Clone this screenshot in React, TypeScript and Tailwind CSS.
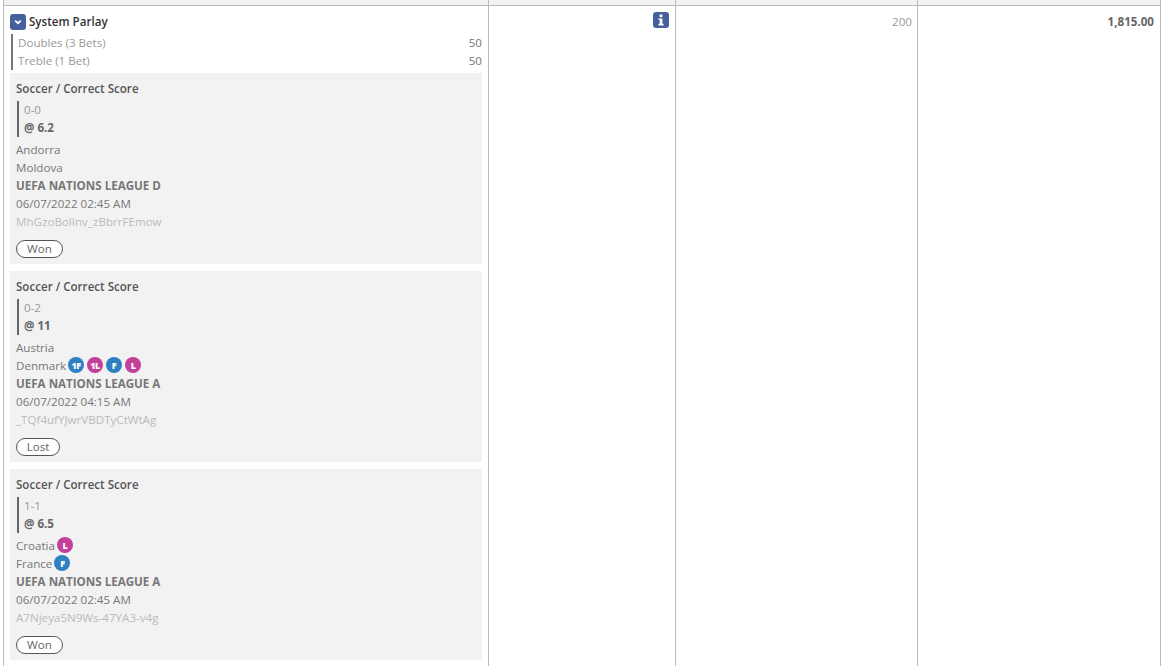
const font = { fontFamily: '"Open Sans", "Noto Sans", sans-serif' };

function Chip({ t, c, first }: { t: string; c: "b" | "m"; first?: boolean }) {
  return (
    <span
      className={`${first ? "ml-[2px]" : "ml-[3px]"} mb-[2px] inline-flex h-[16px] w-[16px] items-center justify-center rounded-full text-[9px] font-extrabold leading-none tracking-[-0.5px] text-white ${c === "b" ? "bg-[#2f80c2]" : "bg-[#c2409a]"}`}
    >
      {t}
    </span>
  );
}

type Leg = {
  score: string;
  odds: string;
  home: React.ReactNode;
  away: React.ReactNode;
  league: string;
  date: string;
  id: string;
  status: string;
  w: string;
};

function Card({ leg }: { leg: Leg }) {
  return (
    <div className="bg-[#f2f2f2] px-[6px] pb-[6px] pt-[7px] text-[11.6px] leading-[18px] text-[#777]">
      <div className="h-[18px] font-semibold text-[#555]">Soccer / Correct Score</div>
      <div className="ml-px mt-[3px] border-l-2 border-[#666] pl-[5px]">
        <div className="h-[18px] text-[#999]">{leg.score}</div>
        <div className="h-[18px] font-bold text-[#666]">{leg.odds}</div>
      </div>
      <div className="mt-[4px] flex h-[18px] items-center">{leg.home}</div>
      <div className="flex h-[18px] items-center">{leg.away}</div>
      <div className="h-[18px] font-bold text-[#777]">{leg.league}</div>
      <div className="h-[18px]">{leg.date}</div>
      <div className="h-[18px] text-[#bbb]">{leg.id}</div>
      <div className={`mt-[9px] flex h-[18px] ${leg.w} items-center justify-center rounded-full border border-[#555] bg-white text-[#666]`}>
        {leg.status}
      </div>
    </div>
  );
}

const legs: Leg[] = [
  {
    score: "0-0",
    odds: "@ 6.2",
    home: "Andorra",
    away: "Moldova",
    league: "UEFA NATIONS LEAGUE D",
    date: "06/07/2022 02:45 AM",
    id: "MhGzoBolInv_zBbrrFEmow",
    status: "Won",
    w: "w-[47px]",
  },
  {
    score: "0-2",
    odds: "@ 11",
    home: "Austria",
    away: (
      <>
        Denmark
        <Chip t="1F" c="b" first />
        <Chip t="1L" c="m" />
        <Chip t="F" c="b" />
        <Chip t="L" c="m" />
      </>
    ),
    league: "UEFA NATIONS LEAGUE A",
    date: "06/07/2022 04:15 AM",
    id: "_TQf4ufYJwrVBDTyCtWtAg",
    status: "Lost",
    w: "w-[44px]",
  },
  {
    score: "1-1",
    odds: "@ 6.5",
    home: (
      <>
        Croatia
        <Chip t="L" c="m" first />
      </>
    ),
    away: (
      <>
        France
        <Chip t="F" c="b" first />
      </>
    ),
    league: "UEFA NATIONS LEAGUE A",
    date: "06/07/2022 02:45 AM",
    id: "A7Njeya5N9Ws-47YA3-v4g",
    status: "Won",
    w: "w-[47px]",
  },
];

export default function App() {
  return (
    <div className="h-[666px] w-[1165px] overflow-hidden bg-white pl-[3px] pr-[4px]" style={font}>
      <div className="grid h-[5px] grid-cols-[485px_187px_242px_1fr] border-x border-[#bbb] bg-[#f2f2f2]">
        <div className="border-r border-[#bbb]" />
        <div className="border-r border-[#bbb]" />
        <div className="border-r border-[#bbb]" />
        <div />
      </div>
      <div className="grid h-[661px] grid-cols-[485px_187px_242px_1fr] border-x border-t border-[#bbb]">
        <div className="border-r border-[#bbb] pl-[6px] pr-[6px] pt-[6px]">
          <div className="flex h-[18px] items-center pt-[1px]">
            <span className="flex h-[16px] w-[16px] items-center justify-center rounded-[3px] bg-[#46609c]">
              <svg width="10" height="10" viewBox="0 0 10 10" fill="none">
                <path d="M2.2 3.6 5 6.2 7.8 3.6" stroke="#fff" strokeWidth="1.8" />
              </svg>
            </span>
            <span className="ml-[3px] text-[11.6px] font-semibold text-[#333]">System Parlay</span>
          </div>
          <div className="ml-px mt-[4px] border-l-2 border-[#777] pl-[5px] text-[11.6px] leading-[18px] text-[#999]">
            <div className="flex h-[18px] justify-between">
              <span>Doubles (3 Bets)</span>
              <span className="text-[#777]">50</span>
            </div>
            <div className="flex h-[18px] justify-between">
              <span>Treble (1 Bet)</span>
              <span className="text-[#777]">50</span>
            </div>
          </div>
          <div className="mt-[3px] flex flex-col gap-[7px]">
            {legs.map((l) => (
              <Card key={l.id} leg={l} />
            ))}
          </div>
        </div>
        <div className="flex justify-end border-r border-[#bbb] pr-[6px] pt-[6px]">
          <span className="flex h-[16px] w-[16px] items-center justify-center rounded-[3px] bg-[#46609c]">
            <svg width="8" height="12" viewBox="0 0 8 12" fill="#fff">
              <rect x="2.6" y="0.5" width="2.8" height="2.6" />
              <path d="M1.5 4.4H5.4V9.8H6.6V11.4H1.5V9.8H2.7V6H1.5Z" />
            </svg>
          </span>
        </div>
        <div className="border-r border-[#bbb] pr-[5px] pt-[7px] text-right text-[11.6px] leading-[18px] text-[#999]">200</div>
        <div className="pr-[6px] pt-[7px] text-right text-[11.6px] font-bold leading-[18px] text-[#666]">1,815.00</div>
      </div>
    </div>
  );
}
